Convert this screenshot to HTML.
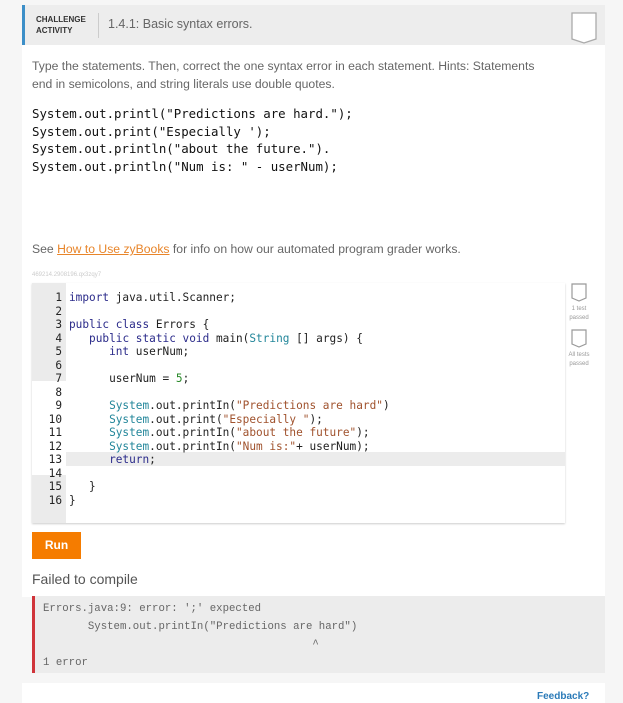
<!DOCTYPE html>
<html><head><meta charset="utf-8"><style>
body{margin:0;width:623px;height:700px;background:#f6f6f6;font-family:"Liberation Sans",sans-serif;overflow:hidden;position:relative}
.card{position:absolute;left:22px;top:5px;width:583px;height:592px;background:#fff}
.hdr{position:absolute;left:0;top:0;width:583px;height:40px;background:#ededed;border-left:3px solid #3c8fc8;box-sizing:border-box}
.ca{position:absolute;left:11px;top:9px;font-size:8px;font-weight:bold;color:#333;line-height:11px}
.sep{position:absolute;left:73px;top:8px;width:1px;height:25px;background:#ccc}
.ttl{position:absolute;left:83px;top:12px;font-size:12.5px;color:#666}
.abs{position:absolute}
.p{font-size:12.2px;color:#666;line-height:18px}
.code{font-size:12.4px;line-height:17.5px;color:#111;white-space:pre;font-family:"DejaVu Sans Mono",monospace}
.ed{position:absolute;left:32px;top:283px;width:533px;height:240px;background:#fff;box-shadow:0 1px 2px rgba(0,0,0,.2)}
.gut{position:absolute;left:0;width:34px;background:#ebebeb}
.ln{position:absolute;left:0;top:8px;width:30px;text-align:right;font-size:11.1px;line-height:13.5px;color:#222;white-space:pre;font-family:"DejaVu Sans Mono",monospace}
.src{position:absolute;left:37px;top:8px;font-size:11.1px;line-height:13.5px;color:#222;white-space:pre;font-family:"DejaVu Sans Mono",monospace}
.k{color:#2b2b8a}.s{color:#a0522d}.t{color:#22869a}.n{color:#2a8a2a}
.small{position:absolute;font-size:6px;color:#999;text-align:center;width:40px;line-height:9px}
</style></head><body>
<div class="card">
 <div class="hdr">
  <div class="ca">CHALLENGE<br>ACTIVITY</div>
  <div class="sep"></div>
  <div class="ttl">1.4.1: Basic syntax errors.</div>
  <svg class="abs" style="left:545px;top:6px" width="28" height="34"><path d="M2 2H26V28L14 32L2 28Z" fill="#fff" stroke="#aaa" stroke-width="1.3"/></svg>
 </div>
</div>
<div class="abs p" style="left:32px;top:57px">Type the statements. Then, correct the one syntax error in each statement. Hints: Statements<br>end in semicolons, and string literals use double quotes.</div>
<div class="abs code" style="left:32px;top:105px">System.out.printl("Predictions are hard.");
System.out.print("Especially ');
System.out.println("about the future.").
System.out.println("Num is: " - userNum);</div>
<div class="abs p" style="left:32px;top:240px">See <span style="color:#e8852a;text-decoration:underline">How to Use zyBooks</span> for info on how our automated program grader works.</div>
<div class="abs" style="left:32px;top:272px;font-size:6px;color:#ccc">469214.2908196.qx3zqy7</div>
<div class="ed">
 <div class="gut" style="top:0;height:98px"></div>
 <div class="gut" style="top:192px;height:48px"></div>
 <div class="abs" style="left:34px;top:169px;width:499px;height:14px;background:#ececec"></div>
 <div class="ln">1
2
3
4
5
6
7
8
9
10
11
12
13
14
15
16</div>
 <div class="src"><span class="k">import</span> java.util.Scanner;

<span class="k">public class</span> Errors {
   <span class="k">public static void</span> main(<span class="t">String</span> [] args) {
      <span class="k">int</span> userNum;

      userNum = <span class="n">5</span>;

      <span class="t">System</span>.out.printIn(<span class="s">"Predictions are hard"</span>)
      <span class="t">System</span>.out.print(<span class="s">"Especially "</span>);
      <span class="t">System</span>.out.printIn(<span class="s">"about the future"</span>);
      <span class="t">System</span>.out.printIn(<span class="s">"Num is:"</span>+ userNum);
      <span class="k">return</span>;

   }
}</div>
</div>
<svg class="abs" style="left:570px;top:283px" width="18" height="20"><path d="M2 1H16V15L9 18L2 15Z" fill="#fff" stroke="#999" stroke-width="1.2"/></svg>
<div class="small" style="left:559px;top:305px">1 test<br>passed</div>
<svg class="abs" style="left:570px;top:329px" width="18" height="20"><path d="M2 1H16V15L9 18L2 15Z" fill="#fff" stroke="#999" stroke-width="1.2"/></svg>
<div class="small" style="left:559px;top:351px">All tests<br>passed</div>
<div class="abs" style="left:32px;top:532px;width:49px;height:27px;background:#f57c00;color:#fff;font-weight:bold;font-size:12px;line-height:27px;text-align:center">Run</div>
<div class="abs" style="left:32px;top:571px;font-size:14px;color:#555">Failed to compile</div>
<div class="abs" style="left:32px;top:596px;width:573px;height:77px;background:#ececec;border-left:3px solid #d0343a;box-sizing:border-box"></div>
<div class="abs" style="left:43px;top:600px;font-size:10.7px;line-height:18px;color:#666;white-space:pre;font-family:'Liberation Mono',monospace">Errors.java:9: error: ';' expected
       System.out.printIn("Predictions are hard")
                                          ^
1 error</div>
<div class="abs" style="left:22px;top:683px;width:583px;height:20px;background:#fff"></div>
<div class="abs" style="left:537px;top:691px;font-size:10px;font-weight:bold;color:#2a7ab8">Feedback?</div>
</body></html>
